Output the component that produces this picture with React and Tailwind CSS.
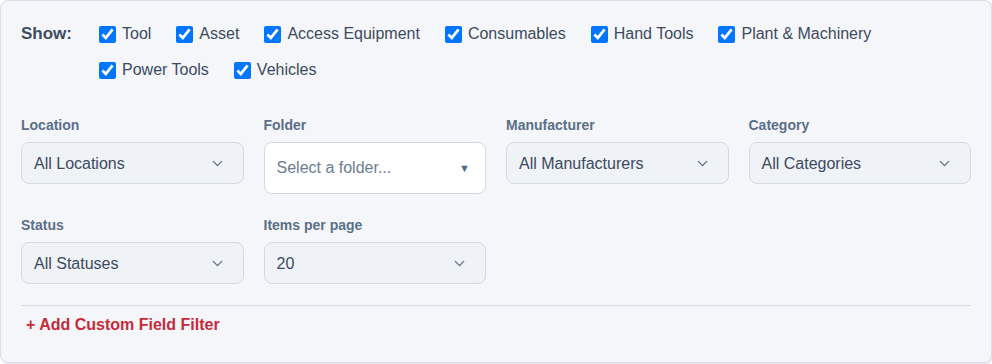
import { ChevronDown } from 'lucide-react'

const types = ['Tool', 'Asset', 'Access Equipment', 'Consumables', 'Hand Tools', 'Plant & Machinery', 'Power Tools', 'Vehicles']

function Field({ label, children }) {
  return (
    <div>
      <div className="text-sm leading-5 font-bold text-[#5b6f88] mb-[7px]">{label}</div>
      {children}
    </div>
  )
}

function Select({ value }) {
  return (
    <div className="h-[42px] flex items-center justify-between rounded-lg border border-[#d3d9e2] bg-[#eff2f7] pl-3 pr-[17px] pt-px text-base text-[#3b4a5e]">
      <span>{value}</span>
      <ChevronDown size={17} strokeWidth={1.8} className="text-[#5a6b80]" />
    </div>
  )
}

export default function App() {
  return (
    <div className="w-[992px] h-[364px] font-['Liberation_Sans',Arial,sans-serif]">
      <div className="h-[363px] rounded-lg border border-[#d9dee6] bg-[#f5f6fa] shadow-[1px_1px_2px_rgba(0,0,0,0.12)] px-5 pt-5">
        {/* type toggles */}
        <div className="flex items-start">
          <div className="w-[78px] h-[26px] flex items-center text-[17px] font-bold text-[#3e4c60]">Show:</div>
          <div className="flex flex-wrap gap-x-[25px] gap-y-[10px] w-[800px]">
            {types.map((t) => (
              <label key={t} className="h-[26px] flex items-center gap-[6px] text-base text-[#3c4a5e]">
                <input type="checkbox" defaultChecked className="w-[17px] h-[17px] m-0" />
                {t}
              </label>
            ))}
          </div>
        </div>

        {/* filters */}
        <div className="grid grid-cols-4 gap-x-5 gap-y-[21px] mt-[32px]">
          <Field label="Location">
            <Select value="All Locations" />
          </Field>
          <Field label="Folder">
            <div className="h-[52px] flex items-center justify-between rounded-lg border border-[#d3d9e2] bg-white pl-3 pr-[15px] text-base text-[#6c7d92]">
              <span>Select a folder...</span>
              <span className="text-[11px] text-[#5a6a80]">▼</span>
            </div>
          </Field>
          <Field label="Manufacturer">
            <Select value="All Manufacturers" />
          </Field>
          <Field label="Category">
            <Select value="All Categories" />
          </Field>
          <Field label="Status">
            <Select value="All Statuses" />
          </Field>
          <Field label="Items per page">
            <Select value="20" />
          </Field>
        </div>

        <div className="border-t border-[#d7dbe2] mt-[21px] pt-[7px]">
          <button className="pl-[5px] text-base font-bold text-[#c62a3a]">+ Add Custom Field Filter</button>
        </div>
      </div>
    </div>
  )
}
